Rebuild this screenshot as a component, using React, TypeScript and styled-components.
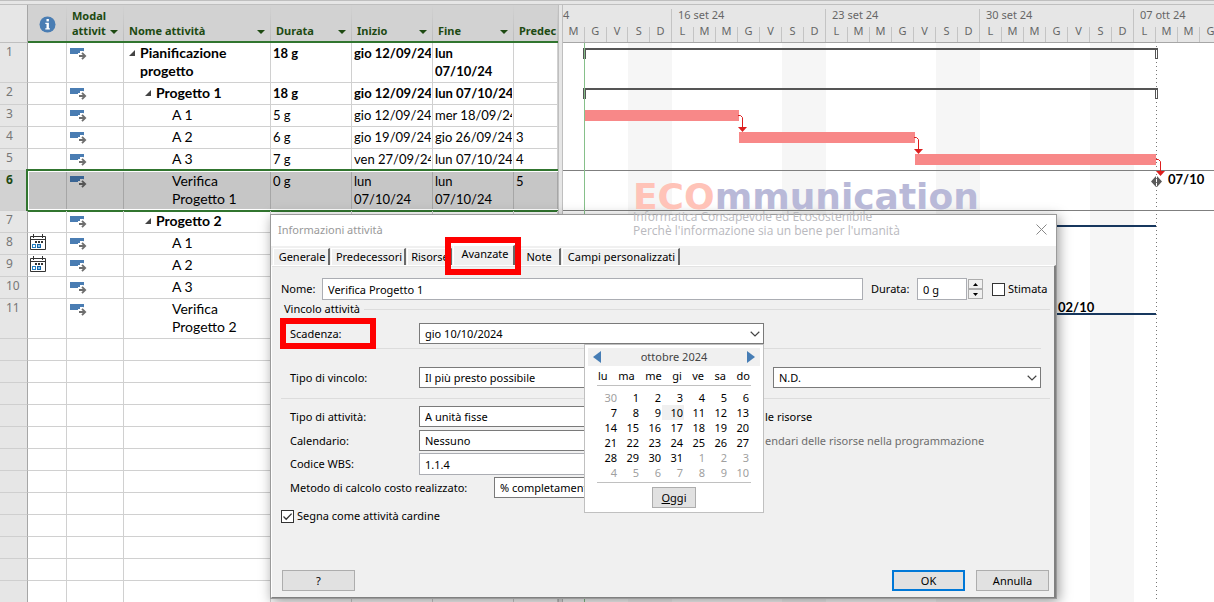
import React from "react";
import styled, { createGlobalStyle, css } from "styled-components";

const uiFont = `"Noto Sans", "Open Sans", sans-serif`;
const sheetFont = `Lato, "Open Sans", sans-serif`;

const GlobalStyle = createGlobalStyle`
  *, *::before, *::after { box-sizing: border-box; }
  body { margin: 0; background: #fff; font: 11px/16px ${uiFont}; color: #000; }
  button, input, select { font: inherit; color: inherit; margin: 0; border-radius: 0; }
`;

/* ---------- Window ---------- */

const Workspace = styled.div`
  position: relative;
  display: flex;
  flex-direction: column;
  height: 100vh;
  overflow: hidden;
`;

const TopEdge = styled.div`
  height: 5px;
  flex: none;
  background: #e6e6e6;
  border-top: 1px solid #bfbfbf;
  border-bottom: 1px solid #bfbfbf;
`;

const Panes = styled.main`
  display: flex;
  flex: 1;
  min-height: 0;
`;

const SheetPane = styled.section`
  width: 559px;
  flex: none;
  overflow: hidden;
  border-right: 1px solid #bfbfbf;
`;

const Splitter = styled.div`
  width: 4px;
  flex: none;
  background: #e6e6e6;
  border-right: 1px solid #bfbfbf;
`;

/* ---------- Task sheet ---------- */

const Sheet = styled.table`
  table-layout: fixed;
  width: 558px;
  border-collapse: separate;
  border-spacing: 0;
  font-family: ${sheetFont};
  font-size: 13px;
  line-height: 18px;
`;

const HeadCell = styled.th`
  height: 38px;
  padding: 0 6px 3px 5px;
  overflow: hidden;
  white-space: nowrap;
  text-align: left;
  vertical-align: bottom;
  background: linear-gradient(to top, #bcbcbc, #d2d2d2) right / 1px 100% no-repeat #d2d2d2;
  border-bottom: 2px solid #31752f;
  color: #1e4a12;
  font: bold 11px/15px ${uiFont};
`;

const CornerCell = styled.th`
  height: 38px;
  background: #e6e6e6;
  border-right: 1px solid #a6a6a6;
  border-bottom: 1px solid #bfbfbf;
`;

const InfoHead = styled(HeadCell)`
  padding: 5px 0 0;
  text-align: center;
  vertical-align: middle;
`;

const HeadContent = styled.div`
  display: flex;
  justify-content: space-between;
  align-items: flex-end;
`;

const Caret = styled.span`
  flex: none;
  margin-bottom: 4px;
  border: 4px solid transparent;
  border-top-color: #1e4a12;
  border-bottom: 0;
`;

const NumberCell = styled.th<{ $selected?: boolean }>`
  padding: 0 0 0 6px;
  text-align: left;
  vertical-align: top;
  background: ${(p) => (p.$selected ? "#d2d2d2" : "#e6e6e6")};
  border-right: 1px solid #a6a6a6;
  border-bottom: 1px solid #cfcfcf;
  color: ${(p) => (p.$selected ? "#1e4a12" : "#777")};
  font: ${(p) => (p.$selected ? "bold" : "normal")} 12px/18px ${uiFont};
`;

const Cell = styled.td`
  padding: 1px 1px 0 2px;
  overflow: hidden;
  white-space: nowrap;
  vertical-align: top;
  border-right: 1px solid #d0d0d0;
  border-bottom: 1px solid #d0d0d0;
`;

const CellText = styled.div`
  overflow: hidden;
`;

const IconCell = styled(Cell)`
  padding: 4px 0 0 3px;
  line-height: 0;
`;

const CalendarCell = styled(Cell)`
  padding: 1px 0 0 2px;
  line-height: 0;
`;

const Row = styled.tr<{ $tall?: boolean; $summary?: boolean; $selected?: boolean }>`
  position: relative;
  height: ${(p) => (p.$tall ? 40 : 22)}px;
  font-weight: ${(p) => (p.$summary ? "bold" : "normal")};
  ${(p) =>
    p.$selected &&
    css`
      ${Cell} {
        background: #c6c6c6;
        border-right-color: #a6a6a6;
      }
      &::after {
        content: "";
        position: absolute;
        top: -2px;
        right: -4px;
        bottom: -1px;
        left: 26px;
        border: 2px solid #31752f;
        box-shadow: inset 0 0 0 1px #fff;
      }
    `}
`;

const TaskName = styled.div<{ $level: number }>`
  display: flex;
  gap: 5px;
  padding-left: ${(p) => 3 + p.$level * 16}px;
  font-size: 14px;
`;

const Toggle = styled.svg`
  flex: none;
  width: 6px;
  height: 6px;
  margin-top: 6px;
`;

/* ---------- Gantt ---------- */

const GanttPane = styled.section`
  flex: 1;
  min-width: 0;
  display: flex;
  flex-direction: column;
  overflow: hidden;
`;

const Timescale = styled.div`
  display: flex;
  flex: none;
  height: 38px;
  padding-top: 4px;
  overflow: hidden;
  background: #e6e6e6;
  border-bottom: 1px solid #a6a6a6;
  color: #666;
`;

const Week = styled.div<{ $partial?: boolean }>`
  flex: none;
  width: ${(p) => (p.$partial ? 109 : 154)}px;
  display: flex;
  flex-direction: column;
  border-right: 1px solid #c4c4c4;
`;

const WeekLabel = styled.div<{ $partial?: boolean }>`
  height: 18px;
  line-height: 12px;
  padding-left: ${(p) => (p.$partial ? 0 : 6)}px;
`;

const Days = styled.div`
  display: flex;
  height: 15px;
`;

const Day = styled.span`
  flex: 1;
  text-align: center;
  line-height: 8px;
  border-right: 1px solid #c4c4c4;
  &:last-child {
    border-right: 0;
  }
`;

const Chart = styled.svg`
  display: block;
  width: 100%;
  flex: 1;
  min-height: 0;
  font: bold 13px ${sheetFont};
`;

/* ---------- Dialog ---------- */

const Dialog = styled.div`
  position: absolute;
  top: 214px;
  left: 270px;
  width: 787px;
  display: flex;
  flex-direction: column;
  background: #f0f0f0;
  border: 1px solid #9a9a9a;
  box-shadow: 2px 3px 12px rgba(0, 0, 0, 0.4);
`;

const TitleBar = styled.header`
  display: flex;
  justify-content: space-between;
  align-items: center;
  height: 31px;
  padding: 0 9px 2px 7px;
  background: #fff;
`;

const Title = styled.h1`
  margin: 0;
  font: inherit;
  color: #999;
`;

const CloseButton = styled.button`
  display: flex;
  padding: 0;
  border: 0;
  background: none;
`;

const TabList = styled.div`
  display: flex;
  align-items: flex-end;
  gap: 1px;
  height: 19px;
  padding-left: 2px;
`;

const Tab = styled.button<{ $width: number; $active?: boolean }>`
  position: relative;
  width: ${(p) => p.$width}px;
  height: ${(p) => (p.$active ? 20 : 17)}px;
  padding: 0 0 0 2px;
  white-space: nowrap;
  line-height: 16px;
  background: #f0f0f0;
  border: 1px solid #fff;
  border-right: 2px solid #696969;
  border-bottom: 0;
  ${(p) => p.$active && css`
    z-index: 1;
    padding: 0 0 3px 3px;
  `}
`;

const TabMarker = styled.span`
  position: absolute;
  inset: -9px -8px -10px -9px;
  border: 6px solid #f00;
`;

const Page = styled.form`
  padding: 12px 4px 6px 9px;
  border: 1px solid #fff;
  border-right: 2px solid #808080;
  border-bottom: 1px solid #808080;
  box-shadow: inset 0 1px 0 #e3e3e3;
`;

const FormRow = styled.div<{ $top?: number; $indent?: boolean }>`
  display: flex;
  align-items: center;
  margin-top: ${(p) => p.$top ?? 0}px;
  padding: ${(p) => (p.$indent ? "0 9px" : "0")};
`;

const Label = styled.label<{ $width: number; $lead?: number }>`
  position: relative;
  flex: none;
  width: ${(p) => p.$width}px;
  padding-left: ${(p) => p.$lead ?? 0}px;
  white-space: nowrap;
`;

const LabelMarker = styled.span`
  position: absolute;
  inset: -8px 43px -7px -10px;
  border: 6px solid #f00;
`;

const TextInput = styled.input<{ $width?: number }>`
  ${(p) => (p.$width ? `width: ${p.$width}px; flex: none;` : "flex: 1; min-width: 0;")}
  height: 22px;
  padding: 0 5px;
  background: #fff;
  border: 1px solid #abadb3;
`;

const Spinner = styled.div`
  display: flex;
  flex-direction: column;
  width: 15px;
  height: 20px;
  margin: 0 9px 0 1px;
`;

const SpinButton = styled.button`
  flex: 1;
  display: flex;
  align-items: center;
  justify-content: center;
  padding: 0;
  background: #f0f0f0;
  border: 1px solid #acacac;
`;

const CheckLabel = styled.label`
  display: flex;
  align-items: center;
  gap: 3px;
  white-space: nowrap;
`;

const EstimatedLabel = styled(CheckLabel)`
  width: 58px;
`;

const CheckBox = styled.input`
  appearance: none;
  width: 13px;
  height: 13px;
  background: #fff;
  border: 1px solid #333;
  &:checked {
    background: #fff
      url("data:image/svg+xml,%3Csvg xmlns='http://www.w3.org/2000/svg' width='11' height='11'%3E%3Cpath d='M1.5 5.5 4.2 8.2 9.6 2.6' fill='none' stroke='%23333' stroke-width='1.3'/%3E%3C/svg%3E");
  }
`;

const Legend = styled.h2`
  display: flex;
  align-items: center;
  gap: 4px;
  height: 16px;
  margin: 1px 0 0;
  padding-left: 3px;
  font: inherit;
  &::after {
    content: "";
    flex: 1;
    height: 1px;
    background: #dcdcdc;
  }
`;

const Rule = styled.hr<{ $inset?: boolean }>`
  height: 1px;
  border: 0;
  margin: ${(p) => (p.$inset ? "4px 9px 0" : "10px 0 0")};
  background: #dcdcdc;
`;

const Combo = styled.div<{ $grow?: boolean }>`
  position: relative;
  ${(p) => (p.$grow ? "flex: 1; margin-left: 9px;" : "flex: none; width: 345px;")}
`;

const MethodBox = styled.div`
  display: flex;
  width: 200px;
  ${Combo} {
    margin-left: 0;
  }
`;

const Select = styled.select`
  appearance: none;
  display: block;
  width: 100%;
  height: 21px;
  padding: 0 20px 0 5px;
  background: #fff;
  border: 1px solid #7a7a7a;
`;

const Chevron = styled.svg`
  position: absolute;
  top: 8px;
  right: 4px;
  pointer-events: none;
`;

const SideText = styled.span<{ $muted?: boolean }>`
  padding-left: 1px;
  white-space: nowrap;
  color: ${(p) => (p.$muted ? "#6d6d6d" : "#000")};
`;

const Actions = styled.div`
  display: flex;
  gap: 11px;
  margin-top: 46px;
  padding: 0 1px;
`;

const PushButton = styled.button<{ $primary?: boolean; $first?: boolean }>`
  width: 73px;
  height: 21px;
  padding: 0;
  line-height: 16px;
  background: #e1e1e1;
  border: ${(p) => (p.$primary ? "2px solid #0078d7" : "1px solid #adadad")};
  ${(p) => p.$first && "margin-right: auto;"}
`;

/* ---------- Date picker ---------- */

const Picker = styled.div`
  position: absolute;
  z-index: 2;
  top: 21px;
  right: 0;
  width: 180px;
  padding: 3px;
  background: #fff;
  border: 1px solid #c0c0c0;
`;

const PickerHead = styled.div`
  display: flex;
  align-items: center;
  justify-content: space-between;
  height: 18px;
  padding: 0 5px;
  background: #f0f0f0;
  color: #444;
`;

const ArrowButton = styled.button`
  display: flex;
  padding: 0;
  border: 0;
  background: none;
`;

const WeekDays = styled.div`
  display: flex;
  justify-content: space-between;
  height: 20px;
  line-height: 19px;
  margin: 0 9px;
  padding: 0 1px;
  border-bottom: 1px solid #c0c0c0;
`;

const DayGrid = styled.div`
  display: grid;
  grid-template-columns: repeat(7, 22px);
  grid-auto-rows: 15px;
  padding: 4px 0 2px 8px;
`;

const DayButton = styled.button<{ $other?: boolean; $current?: boolean }>`
  padding: 0 1px 0 0;
  border: 0;
  text-align: right;
  line-height: 15px;
  background: ${(p) => (p.$current ? "#f0f0f0" : "none")};
  color: ${(p) => (p.$other ? "#a0a0a0" : "#000")};
`;

const PickerFoot = styled.div`
  display: flex;
  justify-content: center;
  margin: 0 9px;
  padding: 4px 0 1px;
  border-top: 1px solid #c0c0c0;
`;

const TodayButton = styled(PushButton)`
  width: 44px;
`;

/* ---------- Watermark ---------- */

const Watermark = styled.div`
  position: absolute;
  top: 184px;
  left: 633px;
  pointer-events: none;
  white-space: nowrap;
  color: #b9b9be;
  font: 12px/14px "Open Sans", sans-serif;
  p {
    margin: 0;
  }
`;

const Brand = styled.div`
  height: 26px;
  line-height: 26px;
  font-family: "DejaVu Sans", sans-serif;
  font-size: 36px;
  font-weight: bold;
  color: #b9b9d8;
  span {
    color: #ffc3b8;
  }
`;

/* ---------- Data ---------- */

type Task = {
  id: number;
  name: string[];
  level: number;
  duration?: string;
  start?: string[];
  end?: string[];
  pred?: string;
  summary?: boolean;
  selected?: boolean;
  calendar?: boolean;
};

const tasks: Task[] = [
  { id: 1, name: ["Pianificazione", "progetto"], level: 0, duration: "18 g", start: ["gio 12/09/24"], end: ["lun", "07/10/24"], summary: true },
  { id: 2, name: ["Progetto 1"], level: 1, duration: "18 g", start: ["gio 12/09/24"], end: ["lun 07/10/24"], summary: true },
  { id: 3, name: ["A 1"], level: 2, duration: "5 g", start: ["gio 12/09/24"], end: ["mer 18/09/24"] },
  { id: 4, name: ["A 2"], level: 2, duration: "6 g", start: ["gio 19/09/24"], end: ["gio 26/09/24"], pred: "3" },
  { id: 5, name: ["A 3"], level: 2, duration: "7 g", start: ["ven 27/09/24"], end: ["lun 07/10/24"], pred: "4" },
  { id: 6, name: ["Verifica", "Progetto 1"], level: 2, duration: "0 g", start: ["lun", "07/10/24"], end: ["lun", "07/10/24"], pred: "5", selected: true },
  { id: 7, name: ["Progetto 2"], level: 1, summary: true },
  { id: 8, name: ["A 1"], level: 2, calendar: true },
  { id: 9, name: ["A 2"], level: 2, calendar: true },
  { id: 10, name: ["A 3"], level: 2 },
  { id: 11, name: ["Verifica", "Progetto 2"], level: 2 },
];

const columnWidths = [28, 39, 57, 147, 81, 81, 81, 44];
const emptyRows = Array.from({ length: 12 }, (_, i) => i);
const weeks = ["4", "16 set 24", "23 set 24", "30 set 24", "07 ott 24"];
const dayLetters = ["L", "M", "M", "G", "V", "S", "D"];
const monthDays = [30, ...Array.from({ length: 31 }, (_, i) => i + 1), ...Array.from({ length: 10 }, (_, i) => i + 1)];

const tabs = [
  { label: "Generale", width: 57 },
  { label: "Predecessori", width: 75 },
  { label: "Risorse", width: 45 },
  { label: "Avanzate", width: 62 },
  { label: "Note", width: 45 },
  { label: "Campi personalizzati", width: 118 },
];

/* ---------- Icons ---------- */

const InfoIcon = () => (
  <svg width="17" height="17" viewBox="0 0 17 17" aria-label="Indicatori">
    <circle cx="8.5" cy="8.5" r="8" fill="#4a7db3" />
    <rect x="7.5" y="3" width="2.4" height="2.4" fill="#fff" />
    <path d="M6.3 6.8h3.6v5.4h1v1.2H6.3v-1.2h1.2V8H6.3z" fill="#fff" />
  </svg>
);

const ModeIcon = ({ dark }: { dark?: boolean }) => (
  <svg width="17" height="13" viewBox="0 0 17 13" aria-hidden="true">
    <rect x="0" y="1" width="14" height="6" fill={dark ? "#3a6594" : "#4a7db3"} />
    <path d="M8 7V6h2V4h3.500L17 8.500 13.500 13H10v-2H8z" fill={dark ? "#c6c6c6" : "#fff"} />
    <path d="M9 9h6M12 5.800 15.200 9 12 12.200" fill="none" stroke={dark ? "#555" : "#6e6e6e"} strokeWidth="1.800" />
  </svg>
);

const CalendarIcon = () => (
  <svg width="16" height="17" viewBox="0 0 16 17" aria-label="Vincolo">
    <path d="M.5 2.500h15v13H.5zM.5 5.500h15M3.500 0v4M12.500 0v4" fill="none" stroke="#333" />
    <path d="M5 7h2v2H5zM8 7h2v2H8zM11 7h2v2h-2z" fill="#333" />
    <rect x="2.500" y="10.500" width="3" height="3" fill="#fff" stroke="#1f7fc4" />
    <rect x="7.500" y="10.500" width="3" height="3" fill="#8ec3ea" stroke="#1464a5" />
  </svg>
);

const Down = () => (
  <Chevron width="10" height="6" viewBox="0 0 10 6" aria-hidden="true">
    <path d="M.7.800 5 5 9.300.800" fill="none" stroke="#444" strokeWidth="1.200" />
  </Chevron>
);

/* ---------- Parts ---------- */

const Lines = ({ text = [] }: { text?: string[] }) => (
  <>
    {text.map((line, i) => (
      <React.Fragment key={i}>
        {i > 0 && <br />}
        {line}
      </React.Fragment>
    ))}
  </>
);

const ColumnHead = ({ text, menu = true }: { text: string[]; menu?: boolean }) => (
  <HeadCell>
    <HeadContent>
      <span>
        <Lines text={text} />
      </span>
      {menu && <Caret />}
    </HeadContent>
  </HeadCell>
);

const TaskRow = ({ task }: { task: Task }) => (
  <Row $tall={task.name.length > 1} $summary={task.summary} $selected={task.selected}>
    <NumberCell $selected={task.selected}>{task.id}</NumberCell>
    <CalendarCell>{task.calendar && <CalendarIcon />}</CalendarCell>
    <IconCell>
      <ModeIcon dark={task.selected} />
    </IconCell>
    <Cell>
      <TaskName $level={task.level}>
        <Toggle viewBox="0 0 6 6">{task.summary && <path d="M6 0v6H0z" fill="#444" />}</Toggle>
        <span>
          <Lines text={task.name} />
        </span>
      </TaskName>
    </Cell>
    <Cell>{task.duration}</Cell>
    <Cell>
      <CellText>
        <Lines text={task.start} />
      </CellText>
    </Cell>
    <Cell>
      <CellText>
        <Lines text={task.end} />
      </CellText>
    </Cell>
    <Cell>{task.pred}</Cell>
  </Row>
);

const Link = ({ x, y }: { x: number; y: number }) => (
  <g transform={`translate(${x} ${y})`}>
    <path d="M-1 .5h2.500l2 2V12" fill="none" stroke="#dc1e1e" />
    <path d="M-1 12h9l-4.500 5z" fill="#dc1e1e" />
  </g>
);

const SummaryBar = ({ y }: { y: number }) => (
  <g fill="#555">
    <rect x="20" y={y} width="574" height="2" />
    <rect x="20" y={y} width="3" height="11" />
    <rect x="592" y={y} width="3" height="11" />
    <rect x="593" y={y + 2} width="1" height="8" fill="#fff" />
  </g>
);

const GanttChart = () => (
  <Chart role="img" aria-label="Diagramma di Gantt">
    {[65, 219, 373, 527].map((x) => (
      <rect key={x} x={x} y="0" width="44" height="100%" fill="#f6f6f6" />
    ))}
    <rect x="0" y="127" width="100%" height="1" fill="#7f7f7f" />
    <rect x="0" y="167" width="100%" height="1" fill="#7f7f7f" />
    <line x1="593.5" x2="593.5" y1="3" y2="100%" stroke="#777" strokeDasharray="1 3" />
    <SummaryBar y={5} />
    <SummaryBar y={45} />
    <rect x="21" y="0" width="1" height="100%" fill="#86c08a" />
    <g fill="#f88888">
      <rect x="22" y="67" width="154" height="11" />
      <rect x="176" y="89" width="176" height="11" />
      <rect x="352" y="111" width="241" height="11" />
    </g>
    <Link x={176} y={72} />
    <Link x={352} y={94} />
    <Link x={594} y={116} />
    <path d="M593 133v11l-5-5.500zM594 133v11l5-5.500z" fill="#5a5a5a" />
    <text x="605" y="141">07/10</text>
    <rect x="60" y="182" width="533" height="2" fill="#17375e" />
    <rect x="60" y="270" width="533" height="2" fill="#17375e" />
    <text x="495" y="269">02/10</text>
  </Chart>
);

const DatePicker = () => (
  <Picker>
    <PickerHead>
      <ArrowButton type="button" aria-label="Mese precedente">
        <svg width="8" height="12"><path d="M8 0v12L0 6z" fill="#467db5" /></svg>
      </ArrowButton>
      <span>ottobre 2024</span>
      <ArrowButton type="button" aria-label="Mese successivo">
        <svg width="8" height="12"><path d="M0 0v12l8-6z" fill="#467db5" /></svg>
      </ArrowButton>
    </PickerHead>
    <WeekDays>
      {["lu", "ma", "me", "gi", "ve", "sa", "do"].map((d) => (
        <span key={d}>{d}</span>
      ))}
    </WeekDays>
    <DayGrid>
      {monthDays.map((d, i) => (
        <DayButton key={i} type="button" $other={i < 1 || i > 31} $current={i === 10}>
          {d}
        </DayButton>
      ))}
    </DayGrid>
    <PickerFoot>
      <TodayButton type="button">
        <u>O</u>ggi
      </TodayButton>
    </PickerFoot>
  </Picker>
);

const SelectBox = ({ id, value, grow, label, children }: { id: string; value: string; grow?: boolean; label?: string; children?: React.ReactNode }) => (
  <Combo $grow={grow}>
    <Select id={id} aria-label={label} defaultValue={value}>
      <option>{value}</option>
    </Select>
    <Down />
    {children}
  </Combo>
);

const TaskDialog = () => (
  <Dialog role="dialog" aria-labelledby="dialog-title">
    <TitleBar>
      <Title id="dialog-title">Informazioni attività</Title>
      <CloseButton type="button" aria-label="Chiudi">
        <svg width="11" height="11"><path d="M.5.500l10 10M10.500.500l-10 10" stroke="#888" /></svg>
      </CloseButton>
    </TitleBar>
    <TabList role="tablist">
      {tabs.map((t) => {
        const active = t.label === "Avanzate";
        return (
          <Tab key={t.label} type="button" role="tab" aria-selected={active} $width={t.width} $active={active}>
            {t.label}
            {active && <TabMarker />}
          </Tab>
        );
      })}
    </TabList>
    <Page>
      <FormRow>
        <Label htmlFor="name" $width={41}>Nome:</Label>
        <TextInput id="name" defaultValue="Verifica Progetto 1" />
        <Label htmlFor="duration" $width={54} $lead={8}>Durata:</Label>
        <TextInput id="duration" $width={50} defaultValue="0 g" />
        <Spinner>
          <SpinButton type="button" aria-label="Aumenta">
            <svg width="5" height="3"><path d="M0 3h5L2.500 0z" /></svg>
          </SpinButton>
          <SpinButton type="button" aria-label="Riduci">
            <svg width="5" height="3"><path d="M0 0h5L2.500 3z" /></svg>
          </SpinButton>
        </Spinner>
        <EstimatedLabel>
          <CheckBox type="checkbox" />
          Stimata
        </EstimatedLabel>
      </FormRow>
      <Legend>Vincolo attività</Legend>
      <FormRow $top={6} $indent>
        <Label htmlFor="deadline" $width={129}>
          Scadenza:
          <LabelMarker />
        </Label>
        <SelectBox id="deadline" value="gio 10/10/2024">
          <DatePicker />
        </SelectBox>
      </FormRow>
      <Rule $inset />
      <FormRow $top={18} $indent>
        <Label htmlFor="constraint" $width={129}>Tipo di vincolo:</Label>
        <SelectBox id="constraint" value="Il più presto possibile" />
        <SelectBox id="constraint-date" label="Data vincolo" value="N.D." grow />
      </FormRow>
      <Rule />
      <FormRow $top={7} $indent>
        <Label htmlFor="type" $width={129}>Tipo di attività:</Label>
        <SelectBox id="type" value="A unità fisse" />
        <SideText>le risorse</SideText>
      </FormRow>
      <FormRow $top={3} $indent>
        <Label htmlFor="calendar" $width={129}>Calendario:</Label>
        <SelectBox id="calendar" value="Nessuno" />
        <SideText $muted>endari delle risorse nella programmazione</SideText>
      </FormRow>
      <FormRow $top={2} $indent>
        <Label htmlFor="wbs" $width={129}>Codice WBS:</Label>
        <TextInput id="wbs" $width={300} defaultValue="1.1.4" />
      </FormRow>
      <FormRow $top={2} $indent>
        <Label htmlFor="method" $width={204}>Metodo di calcolo costo realizzato:</Label>
        <MethodBox>
          <SelectBox id="method" value="% completamento" grow />
        </MethodBox>
      </FormRow>
      <FormRow $top={10}>
        <CheckLabel>
          <CheckBox type="checkbox" defaultChecked />
          Segna come attività cardine
        </CheckLabel>
      </FormRow>
      <Actions>
        <PushButton type="button" $first>?</PushButton>
        <PushButton type="button" $primary>OK</PushButton>
        <PushButton type="button">Annulla</PushButton>
      </Actions>
    </Page>
  </Dialog>
);

export default function App() {
  return (
    <>
      <GlobalStyle />
      <Workspace>
        <TopEdge />
        <Panes>
          <SheetPane>
            <Sheet>
              <colgroup>
                {columnWidths.map((w, i) => (
                  <col key={i} width={w} />
                ))}
              </colgroup>
              <thead>
                <tr>
                  <CornerCell />
                  <InfoHead>
                    <InfoIcon />
                  </InfoHead>
                  <ColumnHead text={["Modal", "attivit"]} />
                  <ColumnHead text={["Nome attività"]} />
                  <ColumnHead text={["Durata"]} />
                  <ColumnHead text={["Inizio"]} />
                  <ColumnHead text={["Fine"]} />
                  <ColumnHead text={["Predec"]} menu={false} />
                </tr>
              </thead>
              <tbody>
                {tasks.map((t) => (
                  <TaskRow key={t.id} task={t} />
                ))}
                {emptyRows.map((n) => (
                  <Row key={n}>
                    <NumberCell />
                    {columnWidths.slice(1).map((_, i) => (
                      <Cell key={i} />
                    ))}
                  </Row>
                ))}
              </tbody>
            </Sheet>
          </SheetPane>
          <Splitter />
          <GanttPane>
            <Timescale>
              {weeks.map((w, i) => (
                <Week key={w} $partial={i === 0}>
                  <WeekLabel $partial={i === 0}>{w}</WeekLabel>
                  <Days>
                    {dayLetters.slice(i === 0 ? 2 : 0).map((d, j) => (
                      <Day key={j}>{d}</Day>
                    ))}
                  </Days>
                </Week>
              ))}
            </Timescale>
            <GanttChart />
          </GanttPane>
        </Panes>
        <TaskDialog />
        <Watermark>
          <Brand>
            <span>ECO</span>mmunication
          </Brand>
          <p>Informatica Consapevole ed Ecosostenibile</p>
          <p>Perchè l'informazione sia un bene per l'umanità</p>
        </Watermark>
      </Workspace>
    </>
  );
}
